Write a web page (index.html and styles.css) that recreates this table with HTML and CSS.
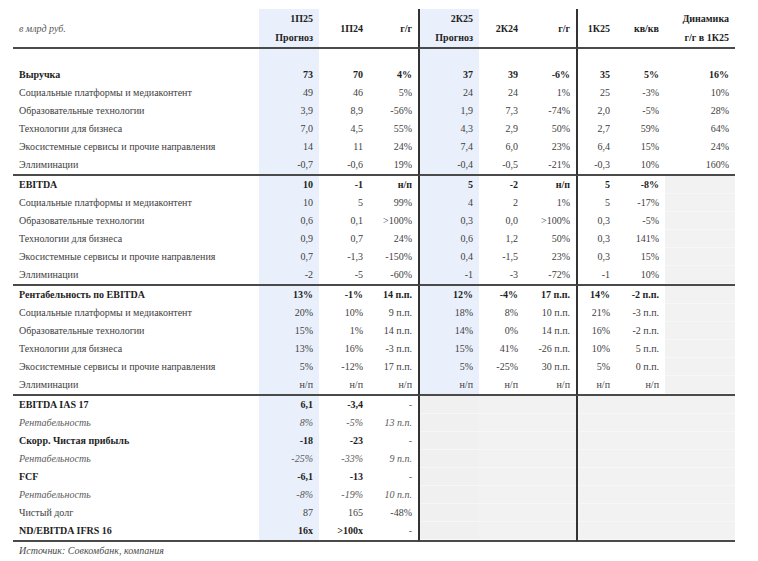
FILE: index.html
```html
<!DOCTYPE html>
<html lang="ru">
<head>
<meta charset="utf-8">
<title>Прогноз</title>
<link rel="stylesheet" href="styles.css">
</head>
<body>
<div class="page">
<table class="fin">
  <colgroup>
    <col class="c-label">
    <col class="c-f1">
    <col class="c-p1">
    <col class="c-y1">
    <col class="c-f2">
    <col class="c-p2">
    <col class="c-y2">
    <col class="c-q">
    <col class="c-qq">
    <col class="c-dyn">
  </colgroup>
  <thead>
    <tr class="head">
      <th class="label unit">в млрд руб.</th>
      <th>1П25<br>Прогноз</th>
      <th>1П24</th>
      <th>г/г</th>
      <th class="vl">2К25<br>Прогноз</th>
      <th>2К24</th>
      <th>г/г</th>
      <th class="vl">1К25</th>
      <th>кв/кв</th>
      <th>Динамика<br>г/г в 1К25</th>
    </tr>
  </thead>
  <tbody>
    <tr class="blank"><td class="label"></td><td></td><td></td><td></td><td class="vl"></td><td></td><td></td><td class="vl"></td><td></td><td></td></tr>
    <tr class="b"><td class="label">Выручка</td><td>73</td><td>70</td><td>4%</td><td class="vl">37</td><td>39</td><td>-6%</td><td class="vl">35</td><td>5%</td><td>16%</td></tr>
    <tr><td class="label">Социальные платформы и медиаконтент</td><td>49</td><td>46</td><td>5%</td><td class="vl">24</td><td>24</td><td>1%</td><td class="vl">25</td><td>-3%</td><td>10%</td></tr>
    <tr><td class="label">Образовательные технологии</td><td>3,9</td><td>8,9</td><td>-56%</td><td class="vl">1,9</td><td>7,3</td><td>-74%</td><td class="vl">2,0</td><td>-5%</td><td>28%</td></tr>
    <tr><td class="label">Технологии для бизнеса</td><td>7,0</td><td>4,5</td><td>55%</td><td class="vl">4,3</td><td>2,9</td><td>50%</td><td class="vl">2,7</td><td>59%</td><td>64%</td></tr>
    <tr><td class="label">Экосистемные сервисы и прочие направления</td><td>14</td><td>11</td><td>24%</td><td class="vl">7,4</td><td>6,0</td><td>23%</td><td class="vl">6,4</td><td>15%</td><td>24%</td></tr>
    <tr class="end"><td class="label">Эллиминации</td><td>-0,7</td><td>-0,6</td><td>19%</td><td class="vl">-0,4</td><td>-0,5</td><td>-21%</td><td class="vl">-0,3</td><td>10%</td><td>160%</td></tr>

    <tr class="b"><td class="label">EBITDA</td><td>10</td><td>-1</td><td>н/п</td><td class="vl">5</td><td>-2</td><td>н/п</td><td class="vl">5</td><td>-8%</td><td class="g"></td></tr>
    <tr><td class="label">Социальные платформы и медиаконтент</td><td>10</td><td>5</td><td>99%</td><td class="vl">4</td><td>2</td><td>1%</td><td class="vl">5</td><td>-17%</td><td class="g"></td></tr>
    <tr><td class="label">Образовательные технологии</td><td>0,6</td><td>0,1</td><td>&gt;100%</td><td class="vl">0,3</td><td>0,0</td><td>&gt;100%</td><td class="vl">0,3</td><td>-5%</td><td class="g"></td></tr>
    <tr><td class="label">Технологии для бизнеса</td><td>0,9</td><td>0,7</td><td>24%</td><td class="vl">0,6</td><td>1,2</td><td>50%</td><td class="vl">0,3</td><td>141%</td><td class="g"></td></tr>
    <tr><td class="label">Экосистемные сервисы и прочие направления</td><td>0,7</td><td>-1,3</td><td>-150%</td><td class="vl">0,4</td><td>-1,5</td><td>23%</td><td class="vl">0,3</td><td>15%</td><td class="g"></td></tr>
    <tr class="end"><td class="label">Эллиминации</td><td>-2</td><td>-5</td><td>-60%</td><td class="vl">-1</td><td>-3</td><td>-72%</td><td class="vl">-1</td><td>10%</td><td class="g"></td></tr>

    <tr class="b"><td class="label">Рентабельность по EBITDA</td><td>13%</td><td>-1%</td><td>14 п.п.</td><td class="vl">12%</td><td>-4%</td><td>17 п.п.</td><td class="vl">14%</td><td>-2 п.п.</td><td class="g"></td></tr>
    <tr><td class="label">Социальные платформы и медиаконтент</td><td>20%</td><td>10%</td><td>9 п.п.</td><td class="vl">18%</td><td>8%</td><td>10 п.п.</td><td class="vl">21%</td><td>-3 п.п.</td><td class="g"></td></tr>
    <tr><td class="label">Образовательные технологии</td><td>15%</td><td>1%</td><td>14 п.п.</td><td class="vl">14%</td><td>0%</td><td>14 п.п.</td><td class="vl">16%</td><td>-2 п.п.</td><td class="g"></td></tr>
    <tr><td class="label">Технологии для бизнеса</td><td>13%</td><td>16%</td><td>-3 п.п.</td><td class="vl">15%</td><td>41%</td><td>-26 п.п.</td><td class="vl">10%</td><td>5 п.п.</td><td class="g"></td></tr>
    <tr><td class="label">Экосистемные сервисы и прочие направления</td><td>5%</td><td>-12%</td><td>17 п.п.</td><td class="vl">5%</td><td>-25%</td><td>30 п.п.</td><td class="vl">5%</td><td>0 п.п.</td><td class="g"></td></tr>
    <tr class="end"><td class="label">Эллиминации</td><td>н/п</td><td>н/п</td><td>н/п</td><td class="vl">н/п</td><td>н/п</td><td>н/п</td><td class="vl">н/п</td><td>н/п</td><td class="g"></td></tr>

    <tr class="b"><td class="label">EBITDA IAS 17</td><td>6,1</td><td>-3,4</td><td class="dash">-</td><td class="vl g g1"></td><td class="g"></td><td class="g"></td><td class="vl g"></td><td class="g"></td><td class="g"></td></tr>
    <tr class="i"><td class="label">Рентабельность</td><td>8%</td><td>-5%</td><td>13 п.п.</td><td class="vl g g1"></td><td class="g"></td><td class="g"></td><td class="vl g"></td><td class="g"></td><td class="g"></td></tr>
    <tr class="b"><td class="label">Скорр. Чистая прибыль</td><td>-18</td><td>-23</td><td class="dash">-</td><td class="vl g g1"></td><td class="g"></td><td class="g"></td><td class="vl g"></td><td class="g"></td><td class="g"></td></tr>
    <tr class="i"><td class="label">Рентабельность</td><td>-25%</td><td>-33%</td><td>9 п.п.</td><td class="vl g g1"></td><td class="g"></td><td class="g"></td><td class="vl g"></td><td class="g"></td><td class="g"></td></tr>
    <tr class="b"><td class="label">FCF</td><td>-6,1</td><td>-13</td><td class="dash">-</td><td class="vl g g1"></td><td class="g"></td><td class="g"></td><td class="vl g"></td><td class="g"></td><td class="g"></td></tr>
    <tr class="i"><td class="label">Рентабельность</td><td>-8%</td><td>-19%</td><td>10 п.п.</td><td class="vl g g1"></td><td class="g"></td><td class="g"></td><td class="vl g"></td><td class="g"></td><td class="g"></td></tr>
    <tr><td class="label">Чистый долг</td><td>87</td><td>165</td><td>-48%</td><td class="vl g g1"></td><td class="g"></td><td class="g"></td><td class="vl g"></td><td class="g"></td><td class="g"></td></tr>
    <tr class="b end"><td class="label">ND/EBITDA IFRS 16</td><td>16x</td><td>&gt;100x</td><td class="dash">-</td><td class="vl g g1"></td><td class="g"></td><td class="g"></td><td class="vl g"></td><td class="g"></td><td class="g"></td></tr>
  </tbody>
</table>
<p class="source">Источник: Совкомбанк, компания</p>
</div>
</body>
</html>
```

FILE: styles.css
```css
html, body {
  margin: 0;
  padding: 0;
  background: #ffffff;
}

body {
  font-family: "Liberation Serif", "Times New Roman", serif;
  font-size: 10px;
  color: #3e3e3e;
}

.page {
  padding: 9px 0 0 13px;
}

.fin {
  width: 722px;
  table-layout: fixed;
  border-collapse: separate;
  border-spacing: 0;
}

.c-label { width: 246px; }
.c-f1 { width: 60px; background: #e9f0fb; }
.c-p1 { width: 50px; }
.c-y1 { width: 49px; }
.c-f2 { width: 61px; background: #e9f0fb; }
.c-p2 { width: 45px; }
.c-y2 { width: 52px; }
.c-q { width: 40px; }
.c-qq { width: 49px; }
.c-dyn { width: 70px; }

.fin th,
.fin td {
  height: 18px;
  padding: 0 6px 0 0;
  line-height: 18px;
  text-align: right;
  white-space: nowrap;
  overflow: visible;
  vertical-align: middle;
}

.fin th {
  font-weight: bold;
  color: #222222;
  line-height: 19px;
  height: 38px;
  border-bottom: 2px solid #4a4a4a;
}

.fin th.unit {
  font-weight: normal;
  font-style: italic;
  color: #555555;
}

.fin .label {
  text-align: left;
  padding: 0 0 0 6px;
}

.fin .vl {
  border-left: 2px solid #333333;
}

.fin tr.blank td {
  height: 17px;
}

.fin tr.b td {
  font-weight: bold;
  color: #1e1e1e;
}

.fin tr.b td.dash {
  font-weight: normal;
  color: #666666;
}

.fin tr.i td {
  font-style: italic;
  color: #5a5a5a;
}

.fin tr.end td {
  border-bottom: 2px solid #4a4a4a;
}

.fin td.g {
  background: #f2f2f2;
  box-shadow: inset 0 -1px 0 #f7f7f7;
}

.fin td.g1 {
  background: #f0f0f0;
}

.source {
  margin: 0;
  padding-left: 6px;
  line-height: 18px;
  font-style: italic;
  color: #4a4a4a;
}
```
